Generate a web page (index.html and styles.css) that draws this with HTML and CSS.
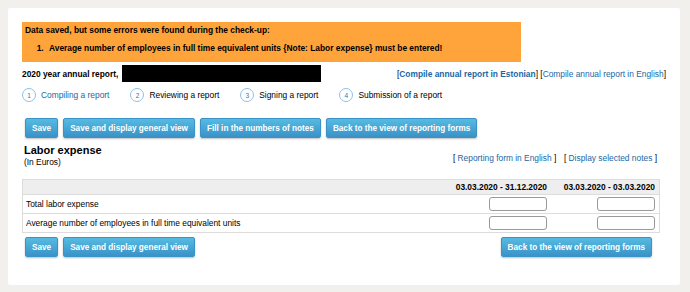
FILE: index.html
```html
<!DOCTYPE html>
<html lang="en">
<head>
    <meta charset="UTF-8">
    <title>Labor expense</title>
    <link rel="stylesheet" href="styles.css">
</head>
<body>
    <div class="card">
        <!-- check-up errors -->
        <div class="alert">
            <p class="alert-title">Data saved, but some errors were found during the check-up:</p>
            <ol class="alert-list">
                <li>Average number of employees in full time equivalent units {Note: Labor expense} must be entered!</li>
            </ol>
        </div>

        <div class="report-head">
            <div class="report-name">
                <b>2020 year annual report,</b>
                <span class="redact"></span>
            </div>
            <div class="lang-links">
                [<a href="#" class="strong">Compile annual report in Estonian</a>]
                [<a href="#">Compile annual report in English</a>]
            </div>
        </div>

        <div class="steps">
            <div class="step active"><span class="num">1</span>Compiling a report</div>
            <div class="step"><span class="num">2</span>Reviewing a report</div>
            <div class="step"><span class="num">3</span>Signing a report</div>
            <div class="step"><span class="num">4</span>Submission of a report</div>
        </div>

        <div class="actions">
            <button class="btn">Save</button>
            <button class="btn">Save and display general view</button>
            <button class="btn">Fill in the numbers of notes</button>
            <button class="btn">Back to the view of reporting forms</button>
        </div>

        <div class="section-head">
            <div>
                <h2>Labor expense</h2>
                <div class="unit">(In Euros)</div>
            </div>
            <div class="form-links">
                [ <a href="#">Reporting form in English</a> ]
                <span class="sep"></span>
                [ <a href="#">Display selected notes</a> ]
            </div>
        </div>

        <table class="form-table">
            <thead>
                <tr>
                    <th></th>
                    <th class="period">03.03.2020 - 31.12.2020</th>
                    <th class="period">03.03.2020 - 03.03.2020</th>
                </tr>
            </thead>
            <tbody>
                <tr>
                    <td>Total labor expense</td>
                    <td class="val"><input type="text"></td>
                    <td class="val"><input type="text"></td>
                </tr>
                <tr>
                    <td>Average number of employees in full time equivalent units</td>
                    <td class="val"><input type="text"></td>
                    <td class="val"><input type="text"></td>
                </tr>
            </tbody>
        </table>

        <div class="actions bottom">
            <button class="btn">Save</button>
            <button class="btn">Save and display general view</button>
            <span class="spacer"></span>
            <button class="btn">Back to the view of reporting forms</button>
        </div>
    </div>
</body>
</html>
```

FILE: styles.css
```css
body {
    font-family: 'Liberation Sans', Arial, sans-serif;
    font-size: 8.4px;
    color: #000;
    background-color: #f1f0ec;
    margin: 0;
    padding: 8px;
}

.card {
    width: 644px;
    height: 249px;
    background: #fff;
    padding: 14px;
    border-radius: 2px;
}

a {
    color: #1b67a5;
    text-decoration: none;
}

/* orange check-up box */
.alert {
    width: 499px;
    height: 40px;
    box-sizing: border-box;
    background: #ffa43b;
    padding: 3px 3px;
    font-weight: bold;
}

.alert-title {
    margin: 0;
    line-height: 10px;
}

.alert-list {
    margin: 8px 0 0;
    padding-left: 21px;
    line-height: 10px;
}

.alert-list li {
    padding-left: 3px;
}

.report-head {
    display: flex;
    justify-content: space-between;
    align-items: center;
    margin-top: 3px;
    height: 17px;
}

.report-name {
    display: flex;
    align-items: center;
    gap: 4px;
}

.redact {
    display: inline-block;
    width: 199px;
    height: 17px;
    background: #000;
}

.lang-links .strong {
    font-weight: bold;
}

.steps {
    display: flex;
    gap: 21px;
    margin-top: 6px;
    height: 14px;
    align-items: center;
}

.step {
    display: flex;
    align-items: center;
    gap: 5px;
}

.step.active {
    color: #1b67a5;
}

.num {
    display: inline-flex;
    align-items: center;
    justify-content: center;
    width: 12px;
    height: 12px;
    border: 1px solid #8cc2e6;
    border-radius: 50%;
    color: #2a75b5;
    font-size: 6.5px;
}

.actions {
    display: flex;
    gap: 5px;
    margin-top: 16px;
    padding-left: 3px;
    padding-right: 8px;
}

.actions.bottom {
    margin-top: 4px;
    padding-right: 14px;
}

.spacer {
    flex: 1;
}

.btn {
    height: 20px;
    padding: 0 6px;
    border: 1px solid #3b92c6;
    border-radius: 2px;
    background: linear-gradient(#55bbe2, #3a92c8);
    box-shadow: 0 1px 2px rgba(0, 0, 0, 0.25);
    color: #fff;
    font-family: 'Liberation Sans', Arial, sans-serif;
    font-size: 8.2px;
    font-weight: bold;
    cursor: pointer;
}

.section-head {
    display: flex;
    justify-content: space-between;
    align-items: flex-end;
    margin-top: 5px;
    padding-left: 2px;
    padding-right: 9px;
}

.section-head h2 {
    margin: 0;
    font-size: 11px;
    line-height: 14px;
}

.unit {
    line-height: 10px;
}

.form-links {
    margin-bottom: 4px;
}

.form-links .sep {
    display: inline-block;
    width: 3px;
}

.form-table {
    width: 638px;
    margin-top: 12px;
    border-collapse: collapse;
    border: 1px solid #dcdcdc;
}

.form-table th {
    height: 14px;
    background: #eeeeee;
    text-align: right;
    padding: 0 4px;
}

.form-table th.period {
    width: 100px;
}

.form-table td {
    height: 18px;
    border-top: 1px solid #dcdcdc;
    padding: 0 3px;
}

.form-table td.val {
    text-align: right;
    padding-right: 4px;
}

.form-table input {
    width: 58px;
    height: 14px;
    box-sizing: border-box;
    border: 1px solid #999;
    border-radius: 3px;
    vertical-align: middle;
}
```
